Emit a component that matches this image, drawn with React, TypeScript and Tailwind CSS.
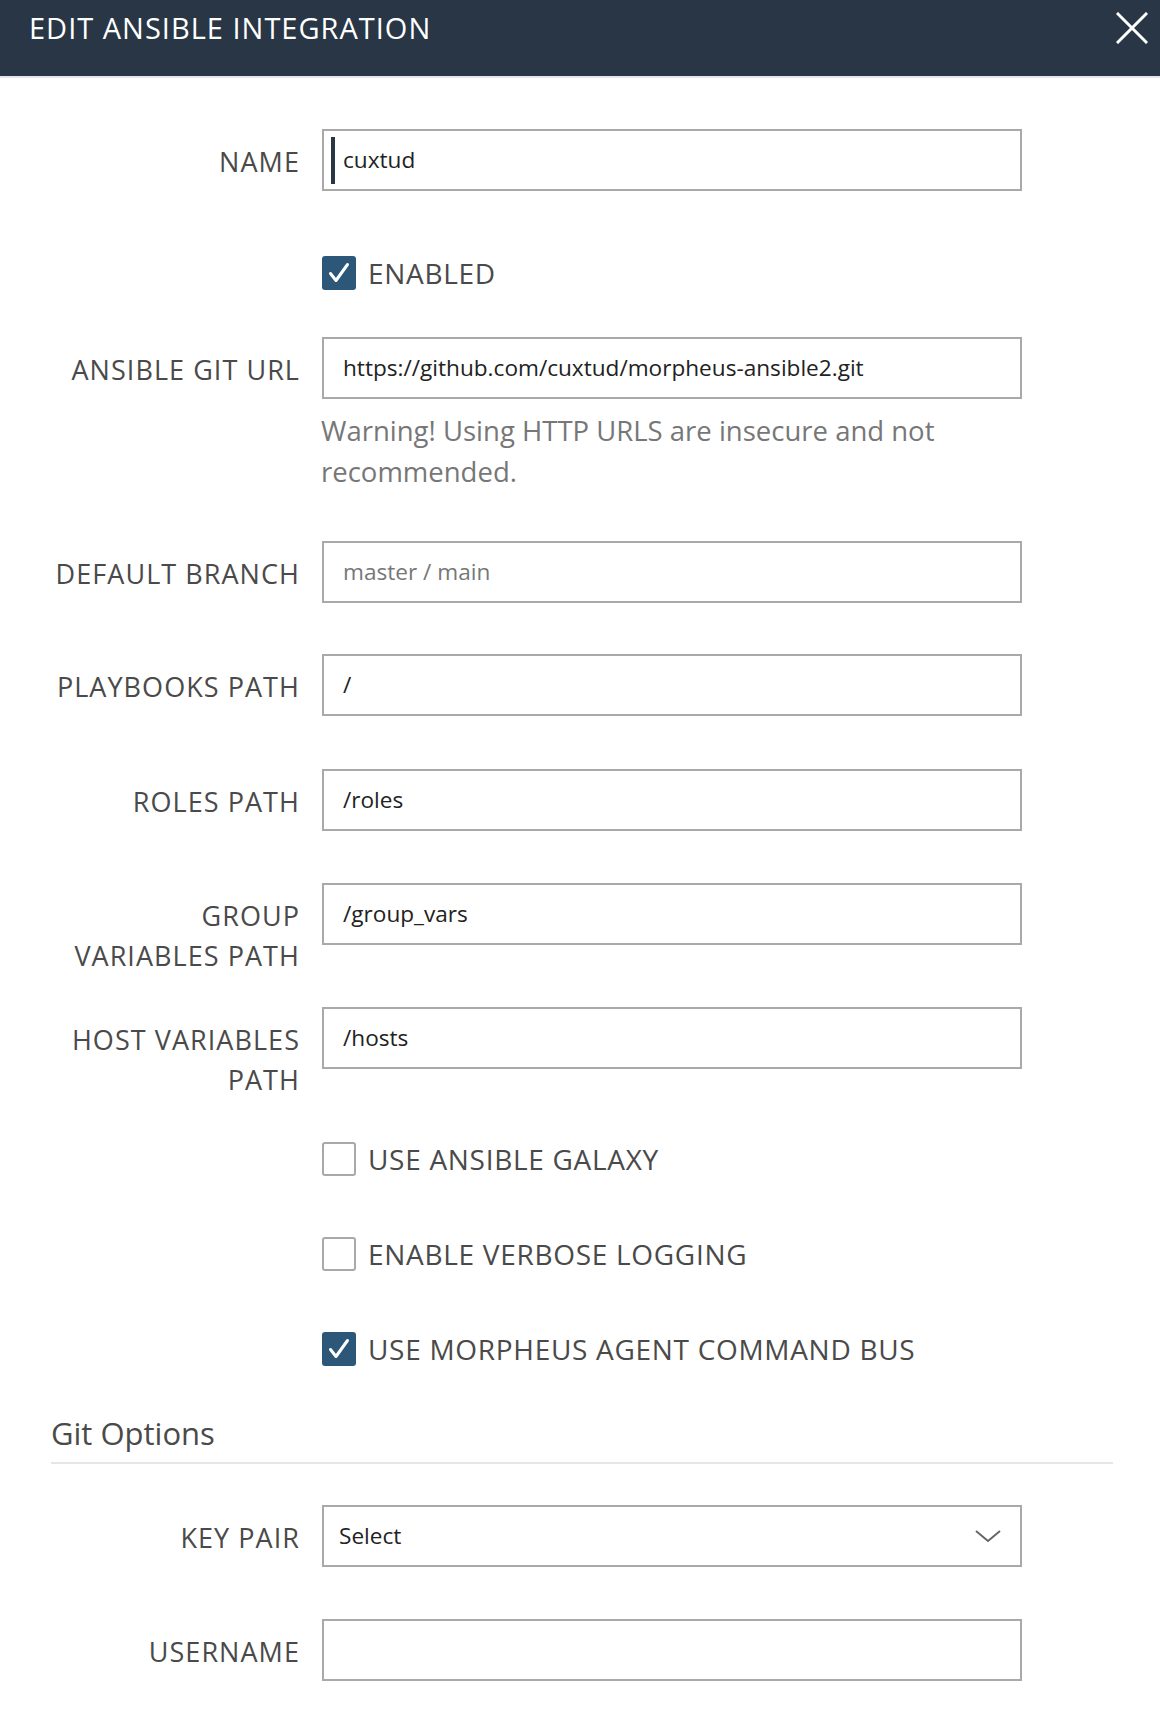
import React from "react";

const font = { fontFamily: "'Open Sans', Lato, sans-serif" };

function Label({ children, two }: { children: React.ReactNode; two?: boolean }) {
  return (
    <div
      className={
        "w-[249px] shrink-0 whitespace-nowrap text-right text-[27px] tracking-[1.05px] text-[#4a4a4a] " +
        (two ? "pt-[13px] leading-[40px]" : "pt-[4px] leading-[30px]")
      }
    >
      {children}
    </div>
  );
}

function Input({ value, placeholder, caret }: { value?: string; placeholder?: string; caret?: boolean }) {
  return (
    <div className="ml-[22px] flex h-[62px] w-[700px] shrink-0 items-center border-2 border-[#a9a9a9] bg-white pl-[19px] text-[22.6px]">
      {caret && <div className="-ml-[12px] mr-[8px] h-[47px] w-[4px] bg-[#283645]" />}
      {value ? (
        <span className="text-[#222]">{value}</span>
      ) : (
        <span className="text-[#777]">{placeholder}</span>
      )}
    </div>
  );
}

function Checkbox({ checked, label, className }: { checked?: boolean; label: string; className: string }) {
  return (
    <div className={"flex h-[34px] items-center " + className}>
      <div className="w-[271px] shrink-0" />
      {checked ? (
        <div className="flex h-[34px] w-[34px] items-center justify-center rounded-[3px] bg-[#2d5778]">
          <svg width="34" height="34" viewBox="0 0 34 34">
            <polyline points="8.5,17.5 14,24.5 25.5,8.5" fill="none" stroke="white" strokeWidth="3" strokeLinecap="round" strokeLinejoin="round" />
          </svg>
        </div>
      ) : (
        <div className="h-[34px] w-[34px] rounded-[3px] border-2 border-[#a9a9a9] bg-white" />
      )}
      <span className="ml-[12px] whitespace-nowrap text-[28px] tracking-[0.7px] text-[#4a4a4a]">{label}</span>
    </div>
  );
}

export default function App() {
  return (
    <div className="min-h-[1730px] w-[1160px] bg-white" style={font}>
      <div className="flex h-[78px] items-start justify-between border-b-2 border-[#e6e6e6] bg-[#283645] pl-[29px] pr-[12px] pt-[7px]">
        <span className="text-[29px] leading-[42px] tracking-[1px] text-white">EDIT ANSIBLE INTEGRATION</span>
        <svg width="32" height="32" viewBox="0 0 32 32" className="mt-[5px]">
          <path d="M2 2 L30 30 M30 2 L2 30" stroke="white" strokeWidth="3" strokeLinecap="square" />
        </svg>
      </div>

      <div className="pl-[51px] pr-[47px]">
        <div className="mt-[51px] flex items-center">
          <Label>NAME</Label>
          <Input value="cuxtud" caret />
        </div>

        <Checkbox checked label="ENABLED" className="mt-[65px]" />

        <div className="mt-[47px] flex items-center">
          <Label>ANSIBLE GIT URL</Label>
          <Input value="https://github.com/cuxtud/morpheus-ansible2.git" />
        </div>
        <div className="mt-[11px] ml-[270px] w-[700px] text-[27.5px] leading-[41px] text-[#777]">
          Warning! Using HTTP URLS are insecure and not
          <br />
          recommended.
        </div>

        <div className="mt-[49px] flex items-center">
          <Label>DEFAULT BRANCH</Label>
          <Input placeholder="master / main" />
        </div>

        <div className="mt-[51px] flex items-center">
          <Label>PLAYBOOKS PATH</Label>
          <Input value="/" />
        </div>

        <div className="mt-[53px] flex items-center">
          <Label>ROLES PATH</Label>
          <Input value="/roles" />
        </div>

        <div className="mt-[52px] flex items-start">
          <Label two>
            GROUP
            <br />
            VARIABLES PATH
          </Label>
          <Input value="/group_vars" />
        </div>

        <div className="mt-[31px] flex items-start">
          <Label two>
            HOST VARIABLES
            <br />
            PATH
          </Label>
          <Input value="/hosts" />
        </div>

        <Checkbox label="USE ANSIBLE GALAXY" className="mt-[42px]" />
        <Checkbox label="ENABLE VERBOSE LOGGING" className="mt-[61px]" />
        <Checkbox checked label="USE MORPHEUS AGENT COMMAND BUS" className="mt-[61px]" />

        <div className="mt-[47px] h-[40px] text-[31px] leading-[40px] text-[#4a4a4a]">Git Options</div>
        <div className="mt-[9px] h-[2px] bg-[#e6e6e6]" />

        <div className="mt-[41px] flex items-center">
          <Label>KEY PAIR</Label>
          <div className="ml-[22px] flex h-[62px] w-[700px] shrink-0 items-center justify-between border-2 border-[#a9a9a9] bg-white pl-[15px] pr-[18px] text-[22.6px] text-[#222]">
            <span>Select</span>
            <svg width="28" height="16" viewBox="0 0 28 16">
              <polyline points="2,3 14,13 26,3" fill="none" stroke="#666" strokeWidth="2" />
            </svg>
          </div>
        </div>

        <div className="mt-[52px] flex items-center">
          <Label>USERNAME</Label>
          <Input />
        </div>
      </div>
    </div>
  );
}
